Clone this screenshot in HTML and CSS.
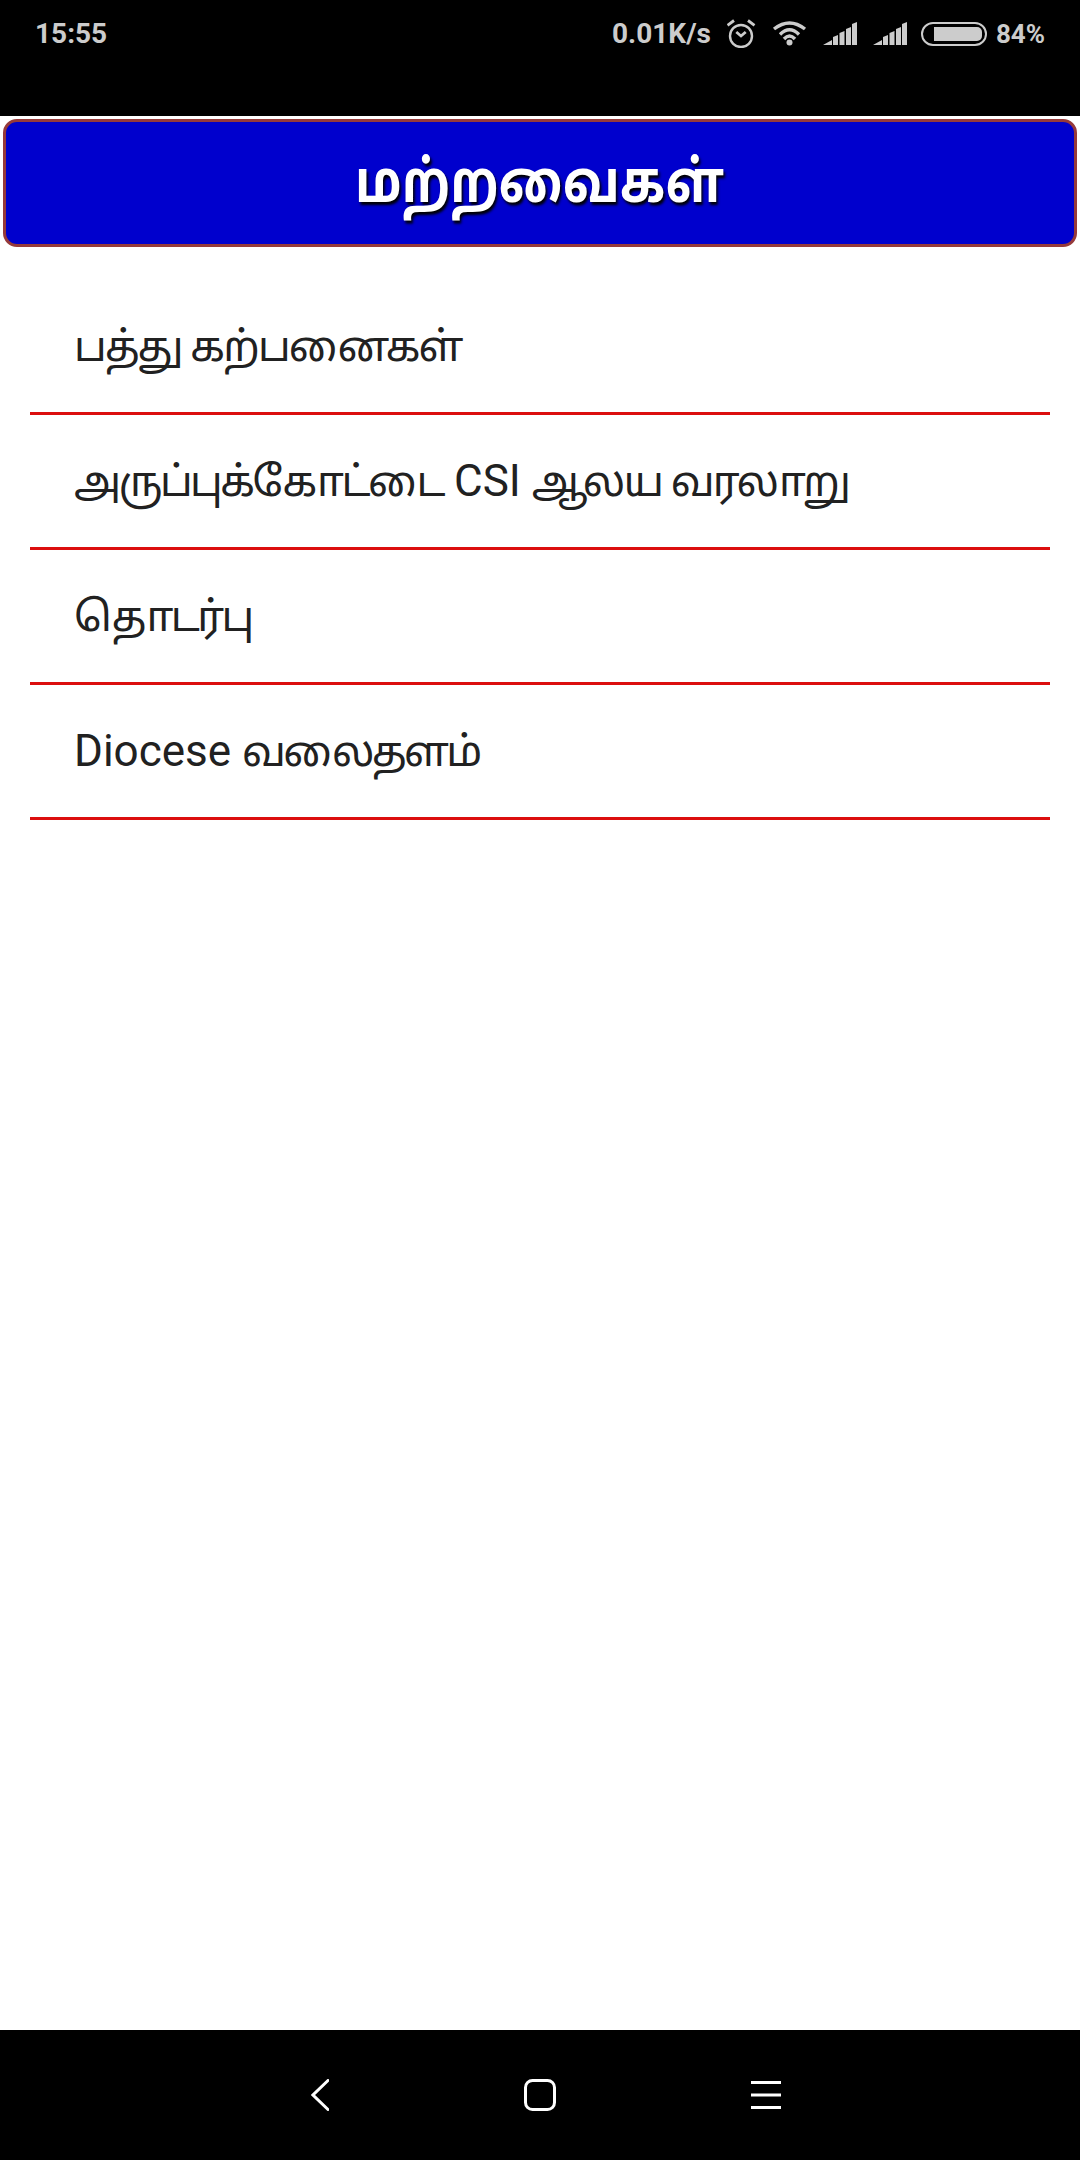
FILE: index.html
```html
<!DOCTYPE html>
<html lang="ta">
<head>
  <meta charset="UTF-8" />
  <title>மற்றவைகள்</title>
  <link rel="stylesheet" href="styles.css">
</head>
<body>
  <div class="status-bar">
    <span class="time">15:55</span>
    <div class="status-right">
      <span class="speed">0.01K/s</span>
      <svg class="alarm" width="29" height="29" viewBox="0 0 29 29" fill="none" stroke="#ccc" stroke-width="2.4"><circle cx="14" cy="17" r="11"/><path d="M9.300 13l4.700 4 4.700-4" stroke-width="2.800"/><path d="M.5 6.300L7 1.500M27.500 6.300L21 1.500" stroke-width="2.800"/></svg>
      <svg class="wifi" width="35" height="25" viewBox="0 0 35 25" fill="none" stroke="#ccc" stroke-width="3.400"><path d="M2 8Q17.500-4 33 8M8 13.500Q17.500 4 27 13.500M12 18Q17.500 12 23 18"/><circle cx="17.500" cy="21.500" r="3" fill="#ccc" stroke="none"/></svg>
      <svg class="signal" width="34" height="23" viewBox="0 0 34 23" fill="#ccc"><path d="M0 23l9-5v5zM10 15l5-2v10h-5zM16.500 11l5-2v14h-5zM23 7l5-2v18h-5zM29 2l5-2v23h-5z"/></svg>
      <svg class="signal" width="34" height="23" viewBox="0 0 34 23" fill="#ccc"><path d="M0 23l9-5v5zM10 15l5-2v10h-5zM16.500 11l5-2v14h-5zM23 7l5-2v18h-5zM29 2l5-2v23h-5z"/></svg>
      <svg class="battery" width="66" height="24" viewBox="0 0 66 24" fill="none"><rect x="1" y="1" width="64" height="22" rx="11" stroke="#ccc" stroke-width="2"/><path d="M13 5h43a5 5 0 0 1 5 5v4a5 5 0 0 1-5 5H13z" fill="#ccc"/></svg>
      <span class="pct">84%</span>
    </div>
  </div>

  <div class="title-bar"><span class="title-text">மற்றவைகள்</span></div>

  <ul class="menu">
    <li><span class="ta ta-wide">பத்து கற்பனைகள்</span></li>
    <li><span class="ta">அருப்புக்கோட்டை</span> CSI <span class="ta ta-wide">ஆலய வரலாறு</span></li>
    <li><span class="ta">தொடர்பு</span></li>
    <li>Diocese <span class="ta">வலைதளம்</span></li>
  </ul>

  <div class="nav-bar">
    <svg width="18" height="32" viewBox="0 0 18 32" fill="none" stroke="#fff" stroke-width="3" stroke-linecap="round"><path d="M17 1.500L2 16l15 14.500"/></svg>
    <svg width="32" height="32" viewBox="0 0 32 32" fill="none" stroke="#fff" stroke-width="3"><rect x="1.500" y="1.500" width="29" height="29" rx="7"/></svg>
    <svg width="30" height="28" viewBox="0 0 30 28" fill="none" stroke="#fff" stroke-width="3"><path d="M0 1.500h30M0 14h30M0 26.500h30"/></svg>
  </div>
</body>
</html>
```

FILE: styles.css
```css
body {
  margin: 0;
  width: 1080px;
  height: 2160px;
  display: flex;
  flex-direction: column;
  background-color: #fff;
  font-family: Roboto, "Noto Sans", "Noto Sans Tamil", sans-serif;
}

.status-bar {
  height: 116px;
  flex-shrink: 0;
  box-sizing: border-box;
  padding: 17px 35px 0 35px;
  background-color: #000;
  color: #ccc;
  display: flex;
  justify-content: space-between;
  align-items: flex-start;
  font-size: 28px;
  font-weight: 700;
}

.status-right {
  display: flex;
  align-items: center;
  gap: 16px;
}

.pct {
  font-size: 26px;
  margin-left: -7px;
}

.battery {
  margin-left: -2px;
}

.title-bar {
  height: 128px;
  flex-shrink: 0;
  box-sizing: border-box;
  margin: 3px 3px 0;
  padding-top: 4px;
  background-color: #0000cd;
  border: 3px solid #963a3a;
  border-radius: 14px;
  color: #fff;
  font-size: 58px;
  font-weight: bold;
  text-shadow: 2px 3px 3px #000;
  display: flex;
  align-items: center;
  justify-content: center;
}

.title-text {
  display: inline-block;
  transform: scaleX(0.86);
}

.menu {
  list-style: none;
  margin: 0;
  padding: 33px 30px 0;
  flex: 1;
}

.menu li {
  height: 135px;
  box-sizing: border-box;
  border-bottom: 3px solid #dc0f0f;
  padding-left: 44px;
  padding-top: 40px;
  font-size: 44px;
  line-height: 52px;
  color: #212121;
}

.ta {
  font-size: 42px;
  letter-spacing: -2.6px;
}

.ta-wide {
  letter-spacing: -1.8px;
}

.nav-bar {
  height: 130px;
  flex-shrink: 0;
  box-sizing: border-box;
  padding-left: 311px;
  background-color: #000;
  display: flex;
  align-items: center;
  gap: 195px;
}
```
